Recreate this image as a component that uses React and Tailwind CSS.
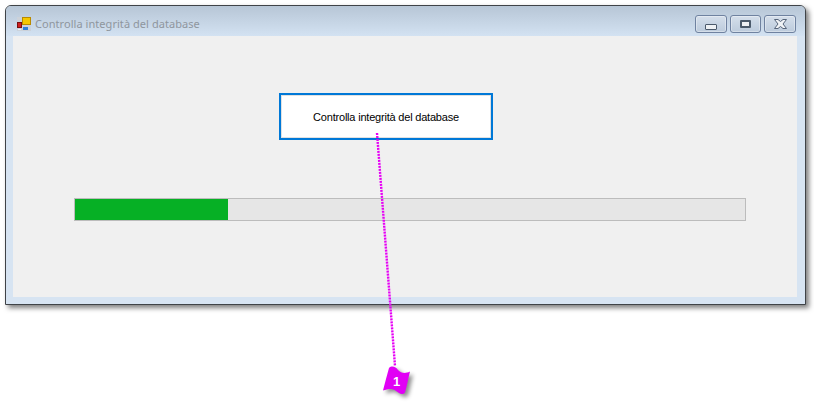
export default function App() {
  return (
    <div className="relative h-[406px] w-[814px] overflow-hidden bg-white pl-[5px] pt-[5px] font-['Liberation_Sans',sans-serif]">
      {/* window */}
      <div className="flex h-[300px] w-[801px] flex-col overflow-hidden rounded-t-[6px] border border-[#3f4347] bg-[#d7e4f2] shadow-[3px_3px_5px_rgba(0,0,0,0.5)]">
        <div className="flex h-[30px] shrink-0 items-start bg-gradient-to-b from-[#b7c6d6] to-[#d3e2f2] pl-[11px] pr-[9px] pt-[9px]">
          <div className="mt-[2px]">
            <AppIcon />
          </div>
          <span className="ml-[4px] mt-[1px] font-['Noto_Sans',sans-serif] text-[11px] leading-[16px] tracking-[0.05px] text-[#8f969e]">Controlla integrità del database</span>
          <div className="ml-auto flex gap-[3px]">
            <CaptionButton w="w-[32px]"><div className="h-[6px] w-[12px] translate-y-[3px] rounded-[1px] border border-[#4b5a6b] bg-[#eef1f4]" /></CaptionButton>
            <CaptionButton w="w-[31px]"><div className="h-[8px] w-[11px] rounded-[1px] border-2 border-[#4b5a6b] bg-[#eef1f4]" /></CaptionButton>
            <CaptionButton w="w-[32px]">
              <svg width="13" height="10" viewBox="0 0 13 10">
                <path d="M0.5 0.5H4L6.5 2.5L9 0.5H12.5L9 5L12.5 9.5H9L6.5 7.5L4 9.5H0.5L4 5Z" fill="#f0f3f6" stroke="#56657a" strokeWidth="1" />
              </svg>
            </CaptionButton>
          </div>
        </div>
        {/* client area */}
        <div className="ml-[7px] mr-[8px] flex h-[261px] flex-col items-start bg-[#f0f0f0] pt-[57px]">
          <div className="ml-[266px] flex h-[47px] w-[214px] items-center justify-center border-2 border-[#0078d7] bg-white pt-[1px] text-[11px] tracking-[-0.2px] text-black shadow-[inset_0_0_0_1px_#e1e1e1]">
            Controlla integrità del database
          </div>
          <div className="ml-[61px] mt-[58px] h-[23px] w-[672px] border border-[#bcbcbc] bg-[#e6e6e6]">
            <div className="h-full w-[153px] bg-[#06b025]" />
          </div>
        </div>
      </div>

      {/* callout */}
      <svg className="absolute left-0 top-0" width="814" height="406" viewBox="0 0 814 406">
        <path d="M377 133L395 366" stroke="#e600f5" strokeWidth="2.4" strokeDasharray="2 1" fill="none" />
        <path className="drop-shadow-[3px_3px_2px_rgba(0,0,0,0.45)]" d="M389 368C392 365 396 367 398 370C401 373 405 374 410 371.5C408 379 407 386 405 392.5C402 396 399 393 396 391C392 388 388 389 383 390.5C385 383 387 375 389 368Z" fill="#e100f5" />
      </svg>
      <span className="absolute left-[393px] top-[374px] text-[13px] font-bold leading-[15px] text-white">1</span>
    </div>
  );
}

function CaptionButton({ w, children }) {
  return (
    <div className={`${w} flex h-[18px] items-center justify-center rounded-[3px] border border-[#6f82a0] bg-gradient-to-b from-[#d5dfeb] to-[#bccbdc] shadow-[inset_0_0_0_1px_rgba(255,255,255,0.35)]`}>
      {children}
    </div>
  );
}

function AppIcon() {
  return (
    <svg className="block" width="14" height="14" viewBox="0 0 14 14" shapeRendering="crispEdges">
      <rect x="0" y="0" width="14" height="14" fill="#ccd2da" />
      <rect x="5.5" y="0.5" width="8" height="7" fill="#f5c800" stroke="#b98a00" />
      <rect x="0.5" y="5.5" width="4" height="5" fill="#d02020" stroke="#7a1010" />
      <rect x="6" y="10" width="5" height="3" fill="#2f80d8" />
      <rect x="1" y="12" width="3" height="1" fill="#eef1f4" />
    </svg>
  );
}
